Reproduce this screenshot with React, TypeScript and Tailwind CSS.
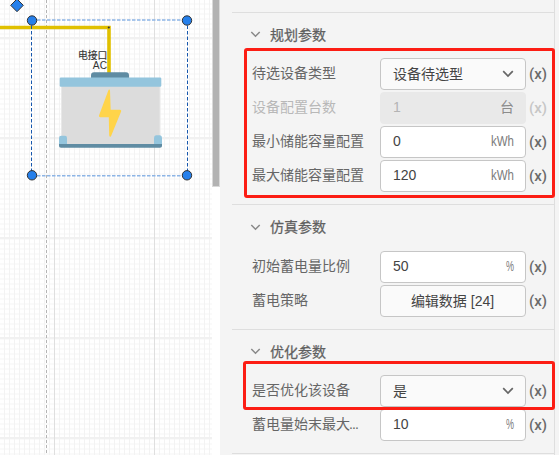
import React from "react";

const sans = "font-['Liberation_Sans','Noto_Sans_CJK_SC',sans-serif]";

function Chevron({ className }: { className: string }) {
  return (
    <svg viewBox="0 0 12 8" className={className} fill="none" stroke="currentColor" strokeWidth="1.7">
      <path d="M1.2 1.2 6 6 10.8 1.2" />
    </svg>
  );
}

type RowProps = {
  label: string;
  value: string;
  unit?: string;
  kind?: "input" | "select" | "button";
  disabled?: boolean;
  clipped?: boolean;
};

function Row({ label, value, unit, kind = "input", disabled, clipped }: RowProps) {
  const box = disabled
    ? "bg-[#e9e9e9] border-[#e9e9e9] text-[#b4b4b4]"
    : kind === "input"
      ? "bg-white border-[#c6c6c6] text-[#444]"
      : "bg-[#fafafa] border-[#c6c6c6] text-[#444]";
  return (
    <div className="flex h-8 items-center pl-5">
      <div className={`w-32 shrink-0 whitespace-nowrap pb-[2px] text-[14px] leading-5 ${disabled ? "text-[#b8b8b8]" : "text-[#666]"}`}>
        {label}
        {clipped && <span className="-ml-px tracking-[-0.9px]">...</span>}
      </div>
      <div
        className={`flex h-8 w-[146px] shrink-0 items-center rounded-[4px] border pl-[12px] pr-[11px] text-[14px] ${box} ${kind === "button" ? "justify-center" : "justify-between"}`}
      >
        <span className={kind === "input" ? "pb-[2px]" : kind === "button" ? "pr-[2px]" : ""}>{value}</span>
        {kind === "select" && <Chevron className="h-[8px] w-[12px] text-[#666]" />}
        {unit === "台" && <span className="pb-px text-[#8c8c8c]">{unit}</span>}
        {unit && unit !== "台" && (
          <svg className={`overflow-visible ${unit === "%" ? "h-5 w-[8px]" : "h-5 w-[23px]"}`}>
            <text
              x="0"
              y="14"
              textLength={unit === "%" ? 8 : 23}
              lengthAdjust="spacingAndGlyphs"
              className={`${sans} fill-[#7c7c7c] text-[14px]`}
            >
              {unit}
            </text>
          </svg>
        )}
      </div>
      <span
        className={`ml-[3px] pb-px font-['Roboto','Liberation_Sans',sans-serif] text-[15px] font-medium leading-5 ${disabled ? "text-[#c6c6c6]" : "text-[#6a6a6a]"}`}
      >
        (x)
      </span>
    </div>
  );
}

function Section({ title, tall, children }: { title: string; tall?: boolean; children?: React.ReactNode }) {
  return (
    <section className="border-t border-[#dedede] pb-3">
      <h2 className={`flex items-center pb-[2px] pl-[18px] text-[14px] text-[#606060] ${tall ? "h-[46px]" : "h-[45px]"}`}>
        <Chevron className="h-[7px] w-[11px] text-[#888]" />
        <span className="ml-[9px] leading-5 [-webkit-text-stroke:0.25px]">{title}</span>
      </h2>
      <div className="flex flex-col gap-[2px]">{children}</div>
    </section>
  );
}

const minorX = Array.from({ length: 43 }, (_, i) => i * 5 - 1);
const minorY = Array.from({ length: 92 }, (_, i) => i * 5 - 2);

function Canvas() {
  return (
    <svg width="212" height="455" className="block shrink-0 bg-white">
      <g shapeRendering="crispEdges">
        {minorY.map((y) => (
          <rect key={y} x="0" y={y} width="212" height="2" fill="#fafafa" />
        ))}
        {minorX.map((x) => (
          <rect key={x} x={x} y="0" width="1" height="455" fill="#f3f3f3" />
        ))}
        {[37, 137, 237, 337, 437].map((y) => (
          <rect key={y} x="0" y={y} width="212" height="2" fill="#f1f1f1" />
        ))}
        <path d="M54.5 0V455M154.5 0V455" stroke="#dfdfdf" />
        <path d="M46.5 0V455" stroke="#b4b4b4" strokeDasharray="3 2" />
      </g>
      <path d="M0 27.5H109V73" fill="none" stroke="#e0c000" strokeWidth="3.6" />
      <circle cx="108.8" cy="27.5" r="1.1" fill="#333" />

      <rect x="61.5" y="84" width="98.5" height="62" fill="#dcdcdc" />
      <path d="M61.5 86V145M160 86V145" stroke="#e8e8e8" />
      <path d="M91 79V75.5Q91 72.3 94 72.3H126Q129 72.3 129 75.5V79Z" fill="#5f8ca3" />
      <rect x="59.7" y="77.5" width="101.6" height="9.2" rx="1.2" fill="#94c5dd" />
      <path d="M59 146V138Q59 135.7 61 135.7H65Q67 135.7 67 138V146ZM154 146V138Q154 135.3 156 135.3H160Q162 135.3 162 138V146Z" fill="#94c5dd" />
      <path d="M59 144H162V146Q162 147.7 160 147.7H61Q59 147.7 59 146Z" fill="#5f8ca3" />
      <path
        d="M108.4 90.2 99 115.6Q98.6 117.3 100.3 117.3H108.8L109.2 135.3Q109.4 137.6 111 136.2L121.2 111.3Q121.6 109.7 119.9 109.7H110.7L110 90.5Q109.4 88.5 108.4 90.2Z"
        fill="#ffd44a"
      />

      <g className={sans} fill="#333" textAnchor="end">
        <text x="107.3" y="59" fontSize="9.8" stroke="#333" strokeWidth="0.15">电接口</text>
        <text x="107" y="69.3" fontSize="10.2">AC</text>
      </g>

      <path d="M32 20H187M32 175.8H187" stroke="#8db5e6" strokeWidth="1.4" strokeDasharray="3.5 1.5" />
      <path d="M31.5 20V175M187.5 20V175" stroke="#1657ad" strokeDasharray="3.5 2" />
      <g fill="#2680eb" stroke="#333" strokeWidth="1">
        <path d="M17 -1 23.3 5.3 17 11.7 10.7 5.3Z" />
        <circle cx="32" cy="20.5" r="4.7" />
        <circle cx="187" cy="20.5" r="4.7" />
        <circle cx="32" cy="175.3" r="4.7" />
        <circle cx="187" cy="175.3" r="4.7" />
      </g>
    </svg>
  );
}

export default function App() {
  return (
    <div className={`relative flex h-[455px] w-[559px] overflow-hidden bg-[#f4f4f4] ${sans}`}>
      <Canvas />
      <div className="w-2 shrink-0 bg-white">
        <div className="h-[187px] border-x border-b border-[#d9d9d9] bg-[#b2b2b2]" />
      </div>
      <aside className="w-[335px] shrink-0 border-r border-[#dedede] pl-3 pt-3">
        <Section title="规划参数">
          <Row label="待选设备类型" value="设备待选型" kind="select" />
          <Row label="设备配置台数" value="1" unit="台" disabled />
          <Row label="最小储能容量配置" value="0" unit="kWh" />
          <Row label="最大储能容量配置" value="120" unit="kWh" />
        </Section>
        <Section title="仿真参数" tall>
          <Row label="初始蓄电量比例" value="50" unit="%" />
          <Row label="蓄电策略" value="编辑数据 [24]" kind="button" />
        </Section>
        <Section title="优化参数">
          <Row label="是否优化该设备" value="是" kind="select" />
          <Row label="蓄电量始末最大" value="10" unit="%" clipped />
        </Section>
        <div className="border-t border-[#dedede]" />
      </aside>
      <div className="absolute left-[244px] top-[48px] h-[150px] w-[311px] rounded-[3px] border-[3px] border-[#fc1d14]" />
      <div className="absolute left-[243px] top-[361px] h-[49px] w-[312px] rounded-[3px] border-[3px] border-[#fc1d14]" />
    </div>
  );
}
